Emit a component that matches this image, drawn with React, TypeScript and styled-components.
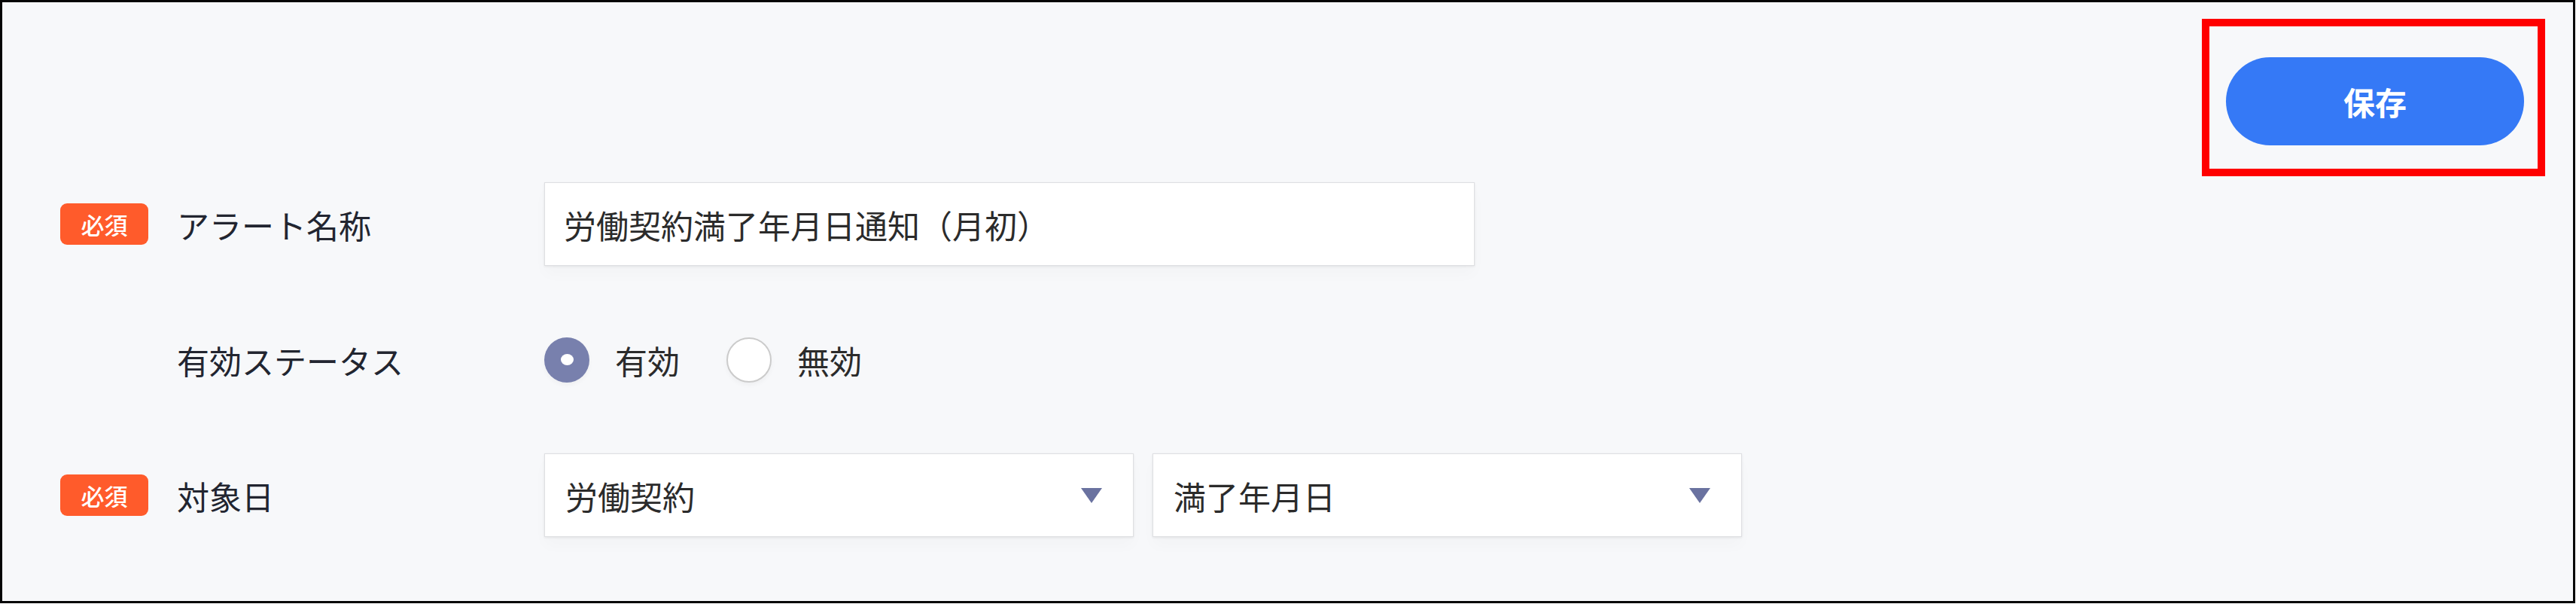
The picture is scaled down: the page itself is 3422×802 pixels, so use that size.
import React from 'react'
import styled, { createGlobalStyle } from 'styled-components'

const GlobalStyle = createGlobalStyle`
  html, body {
    margin: 0;
    padding: 0;
    background: #ffffff;
  }
  body {
    font-family: "Noto Sans CJK JP", "Noto Sans", sans-serif;
  }
`

const statusOptions = [
  { value: 'on', label: '有効' },
  { value: 'off', label: '無効' },
]

const App: React.FC = () => {
  const status = 'on'

  return (
    <>
      <GlobalStyle />
      <Frame>
        {/* 保存ボタン（赤枠で強調） */}
        <Header>
          <Highlight>
            <SaveButton type="button">保存</SaveButton>
          </Highlight>
        </Header>

        <Form>
          <Row>
            <LabelCell>
              <BadgeSlot>
                <Badge>必須</Badge>
              </BadgeSlot>
              <Label>アラート名称</Label>
            </LabelCell>
            <TextBox readOnly defaultValue="労働契約満了年月日通知（月初）" />
          </Row>

          <Row>
            <LabelCell>
              <BadgeSlot />
              <Label>有効ステータス</Label>
            </LabelCell>
            <RadioGroup>
              {statusOptions.map((opt) => (
                <RadioOption key={opt.value}>
                  <RadioMark $checked={opt.value === status} />
                  <RadioText>{opt.label}</RadioText>
                </RadioOption>
              ))}
            </RadioGroup>
          </Row>

          <Row>
            <LabelCell>
              <BadgeSlot>
                <Badge>必須</Badge>
              </BadgeSlot>
              <Label>対象日</Label>
            </LabelCell>
            <SelectGroup>
              <SelectBox>
                <span>労働契約</span>
                <Caret />
              </SelectBox>
              <SelectBox>
                <span>満了年月日</span>
                <Caret />
              </SelectBox>
            </SelectGroup>
          </Row>
        </Form>
      </Frame>
    </>
  )
}

export default App

// Styled-components
const Frame = styled.div`
  width: 3421px;
  height: 801px;
  box-sizing: border-box;
  border: 3px solid #050505;
  background: #f7f8fa;
  display: flex;
  flex-direction: column;
  padding: 22px 37px 0 77px;
`

const Header = styled.div`
  display: flex;
  justify-content: flex-end;
  margin-bottom: 8px;
`

const Highlight = styled.div`
  border: 10px solid #ff0000;
  padding: 41px 18px 31px 22px;
`

const SaveButton = styled.button`
  width: 396px;
  height: 117px;
  border: none;
  border-radius: 60px;
  background: #3579f6;
  color: #ffffff;
  font-family: "Noto Sans CJK JP", "Noto Sans", sans-serif;
  font-size: 42px;
  font-weight: 700;
  display: flex;
  align-items: center;
  justify-content: center;
  cursor: pointer;
`

const Form = styled.div`
  display: flex;
  flex-direction: column;
  gap: 69px;
`

const Row = styled.div`
  display: flex;
  align-items: center;
  height: 111px;
`

const LabelCell = styled.div`
  width: 643px;
  flex-shrink: 0;
  display: flex;
  align-items: center;
  gap: 38px;
`

const BadgeSlot = styled.div`
  width: 117px;
  height: 55px;
  flex-shrink: 0;
`

const Badge = styled.span`
  width: 100%;
  height: 100%;
  display: flex;
  align-items: center;
  justify-content: center;
  background: #ff5b2b;
  color: #ffffff;
  border-radius: 9px;
  font-size: 31px;
  font-weight: 500;
`

const Label = styled.span`
  font-size: 43px;
  color: #222530;
  white-space: nowrap;
`

const TextBox = styled.input`
  width: 1236px;
  height: 111px;
  box-sizing: border-box;
  border: 1px solid #dedfe2;
  background: #ffffff;
  padding: 0 25px;
  font-family: "Noto Sans CJK JP", "Noto Sans", sans-serif;
  font-size: 43px;
  color: #2b2b2b;
  outline: none;
  box-shadow: 0 1px 3px rgba(0, 0, 0, 0.08), 0 12px 18px rgba(0, 0, 0, 0.02);
`

const RadioGroup = styled.div`
  display: flex;
  align-items: center;
  gap: 62px;
`

const RadioOption = styled.label`
  display: flex;
  align-items: center;
  gap: 34px;
  cursor: pointer;
`

const RadioMark = styled.span<{ $checked?: boolean }>`
  width: 60px;
  height: 60px;
  box-sizing: border-box;
  border-radius: 50%;
  display: flex;
  align-items: center;
  justify-content: center;
  background: ${(p) => (p.$checked ? '#7880ad' : '#ffffff')};
  border: ${(p) => (p.$checked ? 'none' : '2px solid #cbcbcb')};
  box-shadow: 0 3px 6px rgba(0, 0, 0, 0.04);

  &::after {
    content: '';
    display: ${(p) => (p.$checked ? 'block' : 'none')};
    width: 17px;
    height: 15px;
    border-radius: 50%;
    background: #ffffff;
  }
`

const RadioText = styled.span`
  font-size: 43px;
  color: #2b2b2b;
`

const SelectGroup = styled.div`
  display: flex;
  gap: 25px;
`

const SelectBox = styled.div`
  width: 783px;
  height: 111px;
  box-sizing: border-box;
  border: 1px solid #dedfe2;
  background: #ffffff;
  padding: 0 41px 0 27px;
  display: flex;
  align-items: center;
  justify-content: space-between;
  font-size: 43px;
  color: #2b2b2b;
  box-shadow: 0 1px 3px rgba(0, 0, 0, 0.08), 0 12px 18px rgba(0, 0, 0, 0.02);
`

const Caret = styled.span`
  width: 0;
  height: 0;
  border-left: 14px solid transparent;
  border-right: 14px solid transparent;
  border-top: 20px solid #6a72a0;
`
